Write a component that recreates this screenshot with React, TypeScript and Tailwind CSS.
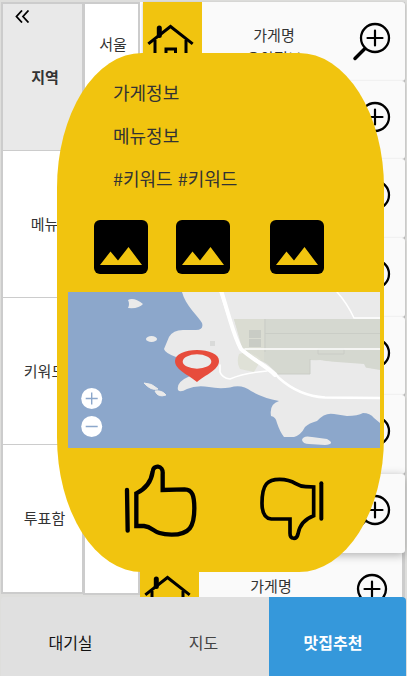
const kr = "font-['Noto_Sans_CJK_KR',sans-serif]";

function HomeIcon() {
  return (
    <svg className="mt-[19px] mr-[3px] h-[52px] w-[54px] shrink-0" viewBox="0 0 54 52" fill="none" stroke="#000">
      <path d="M5.500 22 26.500 5.500 47.500 22" strokeWidth="3" strokeLinecap="square" />
      <path d="M15.300 7V14.500" strokeWidth="5" strokeLinecap="round" />
      <path d="M11 19V44H42V19M22 44V28H31.500V44" strokeWidth="3" />
    </svg>
  );
}

function ZoomIcon() {
  return (
    <svg className="h-[40px] w-[40px] shrink-0" viewBox="0 0 40 40" fill="none" stroke="#000" strokeLinecap="round">
      <circle cx="23" cy="16" r="14" strokeWidth="2.300" />
      <path d="M15.500 16H30.500M23 8.500V23.500" strokeWidth="2.200" />
      <path d="M12.500 27 3 36.500" strokeWidth="3.500" />
    </svg>
  );
}

function ShopCard({ last = false }: { last?: boolean }) {
  return (
    <div
      className={
        last
          ? "mr-[3px] flex h-[78px] shrink-0 bg-[#fafafa]"
          : "ml-[3px] flex h-[78.700px] shrink-0 overflow-hidden rounded-r-[3px] bg-[#fafafa] shadow-[0_1px_3px_rgba(0,0,0,0.250)] nth-[7]:relative nth-[7]:shadow-[0_2px_10px_rgba(0,0,0,0.300)]"
      }
    >
      <div className="flex w-[59px] shrink-0 justify-center bg-[#f1c40f]">
        <HomeIcon />
      </div>
      <div className="flex-1 pt-[21px] pr-[6px] text-center text-[15px] leading-[23px] text-[#333]">
        <p>가게명</p>
        {!last && <p>요약정보</p>}
      </div>
      <div className="pt-[20px] pr-[13px]">
        <ZoomIcon />
      </div>
    </div>
  );
}

function Picture() {
  return (
    <svg className="h-[54px] w-[54px]" viewBox="0 0 54 54">
      <rect width="54" height="54" rx="6" fill="#000" />
      <path d="M6 45 16.500 31.500 24 40.500 34.500 27 48 45Z" fill="#f1c40f" />
    </svg>
  );
}

function MapView() {
  return (
    <svg className="block h-[156px] w-[312px]" viewBox="0 0 312 156">
      <rect width="312" height="156" fill="#8ca7cb" />
      <path
        d="M114 0C117 13 131 25 134 31Q136 38 128 38H115Q105 38 101 45L96 57Q97 61 108 65L122 84Q108 90 110 98Q112 101 119 97Q128 93 141 95Q151 97 162 95.500Q174 92 183 99Q195 106 211 109Q201 112 203 124Q208 125 209 131Q212 140 216 145H226Q233 143 237 135Q241 131 249 129Q257 120 266 122L279 124Q290 124 295 121Q302 121 306 126L312 131V0Z"
        fill="#eaeaea"
      />
      <path d="M166 27H312V78L252 68 242 69V82H210L199 72 180 61 174 53Z" fill="#d5d8d0" />
      <path d="M166 27H196V70L174 56Z" fill="#dadcd2" />
      <path d="M171 62Q184 58 193 68L186 80 172 77Q168 70 171 62Z" fill="#dfe1d7" />
      <path d="M242 68 296 72 298 76 312 79V84H242Z" fill="#eaeaea" />
      <path d="M181 38H193V46H181ZM181 47H193V55H181Z" fill="#c9ccc5" />
      <path d="M197 27V60M197 41.500H312M209 82H242V67M250 62H276V57H250Z" fill="none" stroke="#c8ccc5" strokeWidth=".9" />
      <g fill="none" stroke="#fff" strokeLinecap="round">
        <path d="M152 -2 162 28Q168 48 172 56C183 68 201 72 211 86Q231 104 257 105.500L312 106" strokeWidth="2.500" />
        <path d="M153 -2 162 28Q168 48 173 57C184 67 198 74 207 83" strokeWidth="4" />
        <path d="M177 57H312" strokeWidth="1.600" />
        <path d="M269 0Q279 11 286 26H312" strokeWidth="1.500" />
        <path d="M152 73V80Q154 86 162 87Q176 81 199 79" strokeWidth="1.600" />
      </g>
      <path d="M142 49H147V54H142Z" fill="#d9dad9" />
      <g fill="#eaeaea">
        <path d="M60 8Q66 5 75 12Q71 17 60 16Q62 12 60 8Z" />
        <ellipse cx="83.500" cy="47" rx="5.500" ry="3" />
        <path d="M76 91Q84 91 90 97Q83 99 76 91ZM87 99Q94 98 98 103Q90 106 87 99Z" stroke="#eaeaea" />
        <path d="M234 148Q235 143 244 145L259 147Q268 152 257 153L241 152Q235 152 234 148Z" />
      </g>
      <path
        fillRule="evenodd"
        d="M129 90C121 83 107 78 107 69C107 62 117 58 129 58S151 62 151 69C151 78 137 83 129 90ZM129 62.300A14.300 7.200 0 1 0 129 76.700A14.300 7.200 0 1 0 129 62.300Z"
        fill="#e74c3c"
      />
      <circle cx="23.700" cy="106.500" r="10.500" fill="#fff" />
      <circle cx="23.700" cy="134.500" r="10.500" fill="#fff" />
      <path d="M17.700 106.500H29.700M23.700 100.500V112.500M17.700 134.500H29.700" stroke="#8ca7cb" strokeWidth="1.400" />
    </svg>
  );
}

function ThumbUp() {
  return (
    <svg className="h-[76px] w-[76px]" viewBox="220 69 228 228" fill="none" stroke="#000">
      <path
        d="M260 160V258H283C315 262 310 284 366 284C420 284 434 260 434 205C434 168 428 148 405 148L339 150V102C342 74 309 74 309 95C304 130 285 148 260 160Z"
        strokeWidth="13"
      />
      <path d="M232 150 234 272" strokeWidth="13" strokeLinecap="round" />
    </svg>
  );
}

function ThumbDown() {
  return (
    <svg className="h-[66px] w-[66px]" viewBox="98 108 198 198" fill="none" stroke="#000">
      <path
        d="M262 141V227C240 235 220 252 215 282C211 300 191 299 191 280V237H135C114 235 107 215 107 190C107 130 125 118 160 118C210 119 205 139 238 140Z"
        strokeWidth="11"
      />
      <path d="M285 130V236" strokeWidth="12" strokeLinecap="round" />
    </svg>
  );
}

function DetailPopup() {
  return (
    <section className="absolute top-[53px] left-[57px] z-20 h-[519px] w-[327px] rounded-[26%] bg-[#f1c40f] text-[#333]">
      <div className="pt-[17.500px] pl-[56px] text-[18px] leading-[43px]">
        <p>가게정보</p>
        <p>메뉴정보</p>
        <p className="[word-spacing:1px]">#키워드 #키워드</p>
      </div>
      <div className="mt-[20.500px] flex pl-[37px]">
        <Picture />
        <div className="mr-[40px] ml-[28px]">
          <Picture />
        </div>
        <Picture />
      </div>
      <div className="mt-[18px] ml-[11px]">
        <MapView />
      </div>
      <div className="mt-[15px] flex items-start justify-between pr-[59.500px] pl-[66px]">
        <ThumbUp />
        <div className="pt-[13px]">
          <ThumbDown />
        </div>
      </div>
    </section>
  );
}

export default function App() {
  return (
    <div className={`${kr} h-[676px] w-[407px] overflow-hidden bg-[#dededc]`}>
      <div className="relative flex h-[597px] overflow-hidden pt-[2px] pr-[2px] pl-px">
        <nav className="z-10 flex h-[592px] w-[83px] shrink-0 flex-col border-2 border-[#ccc] bg-white text-[15px] text-[#333]">
          <div className="relative flex h-[147px] items-center justify-center border-b border-[#ccc] bg-[#e9e9e9] pl-[5px] font-bold">
            <svg
              className="absolute top-[6px] left-[12px] h-[13px] w-[15px]"
              viewBox="0 0 15 13"
              fill="none"
              stroke="#000"
              strokeWidth="1.800"
            >
              <path d="M7 .5 1.500 6.500 7 12.500M13.500 .5 8 6.500 13.500 12.500" />
            </svg>
            지역
          </div>
          <div className="flex h-[147px] items-center justify-center border-b border-[#ccc] pl-[4px]">메뉴</div>
          <div className="flex h-[147px] items-center justify-center border-b border-[#ccc] pl-[4px]">키워드</div>
          <div className="flex flex-1 items-center justify-center pb-px pl-[4px]">투표함</div>
        </nav>
        <div className="-ml-px h-[593px] w-[57px] shrink-0 border-2 border-[#ccc] bg-white pt-[29px] pl-[3px] text-center text-[15px] leading-[22px] text-[#333]">
          서울
        </div>
        <div className="h-[620px] flex-1 bg-[linear-gradient(to_right,white_50%,#ccc_50%)]">
          <ShopCard />
          <ShopCard />
          <ShopCard />
          <ShopCard />
          <ShopCard />
          <ShopCard />
          <ShopCard />
          <ShopCard last />
        </div>
        <DetailPopup />
      </div>
      <footer className="flex h-[79px] pl-px text-[16px]">
        <div className="z-10 flex w-[139px] items-center justify-center rounded-tl-[4px] bg-[#e0e0e0] pt-[11px] text-[#111]">
          대기실
        </div>
        <div className="flex w-[129px] items-center justify-center rounded-tr-[4px] bg-[#e0e0e0] pt-[11px] pr-[2px] text-[#444]">
          지도
        </div>
        <div className="flex w-[137px] items-center justify-center rounded-tr-[4px] bg-[#3598db] pt-[11px] pr-[9px] font-bold text-white">
          맛집추천
        </div>
      </footer>
    </div>
  );
}
